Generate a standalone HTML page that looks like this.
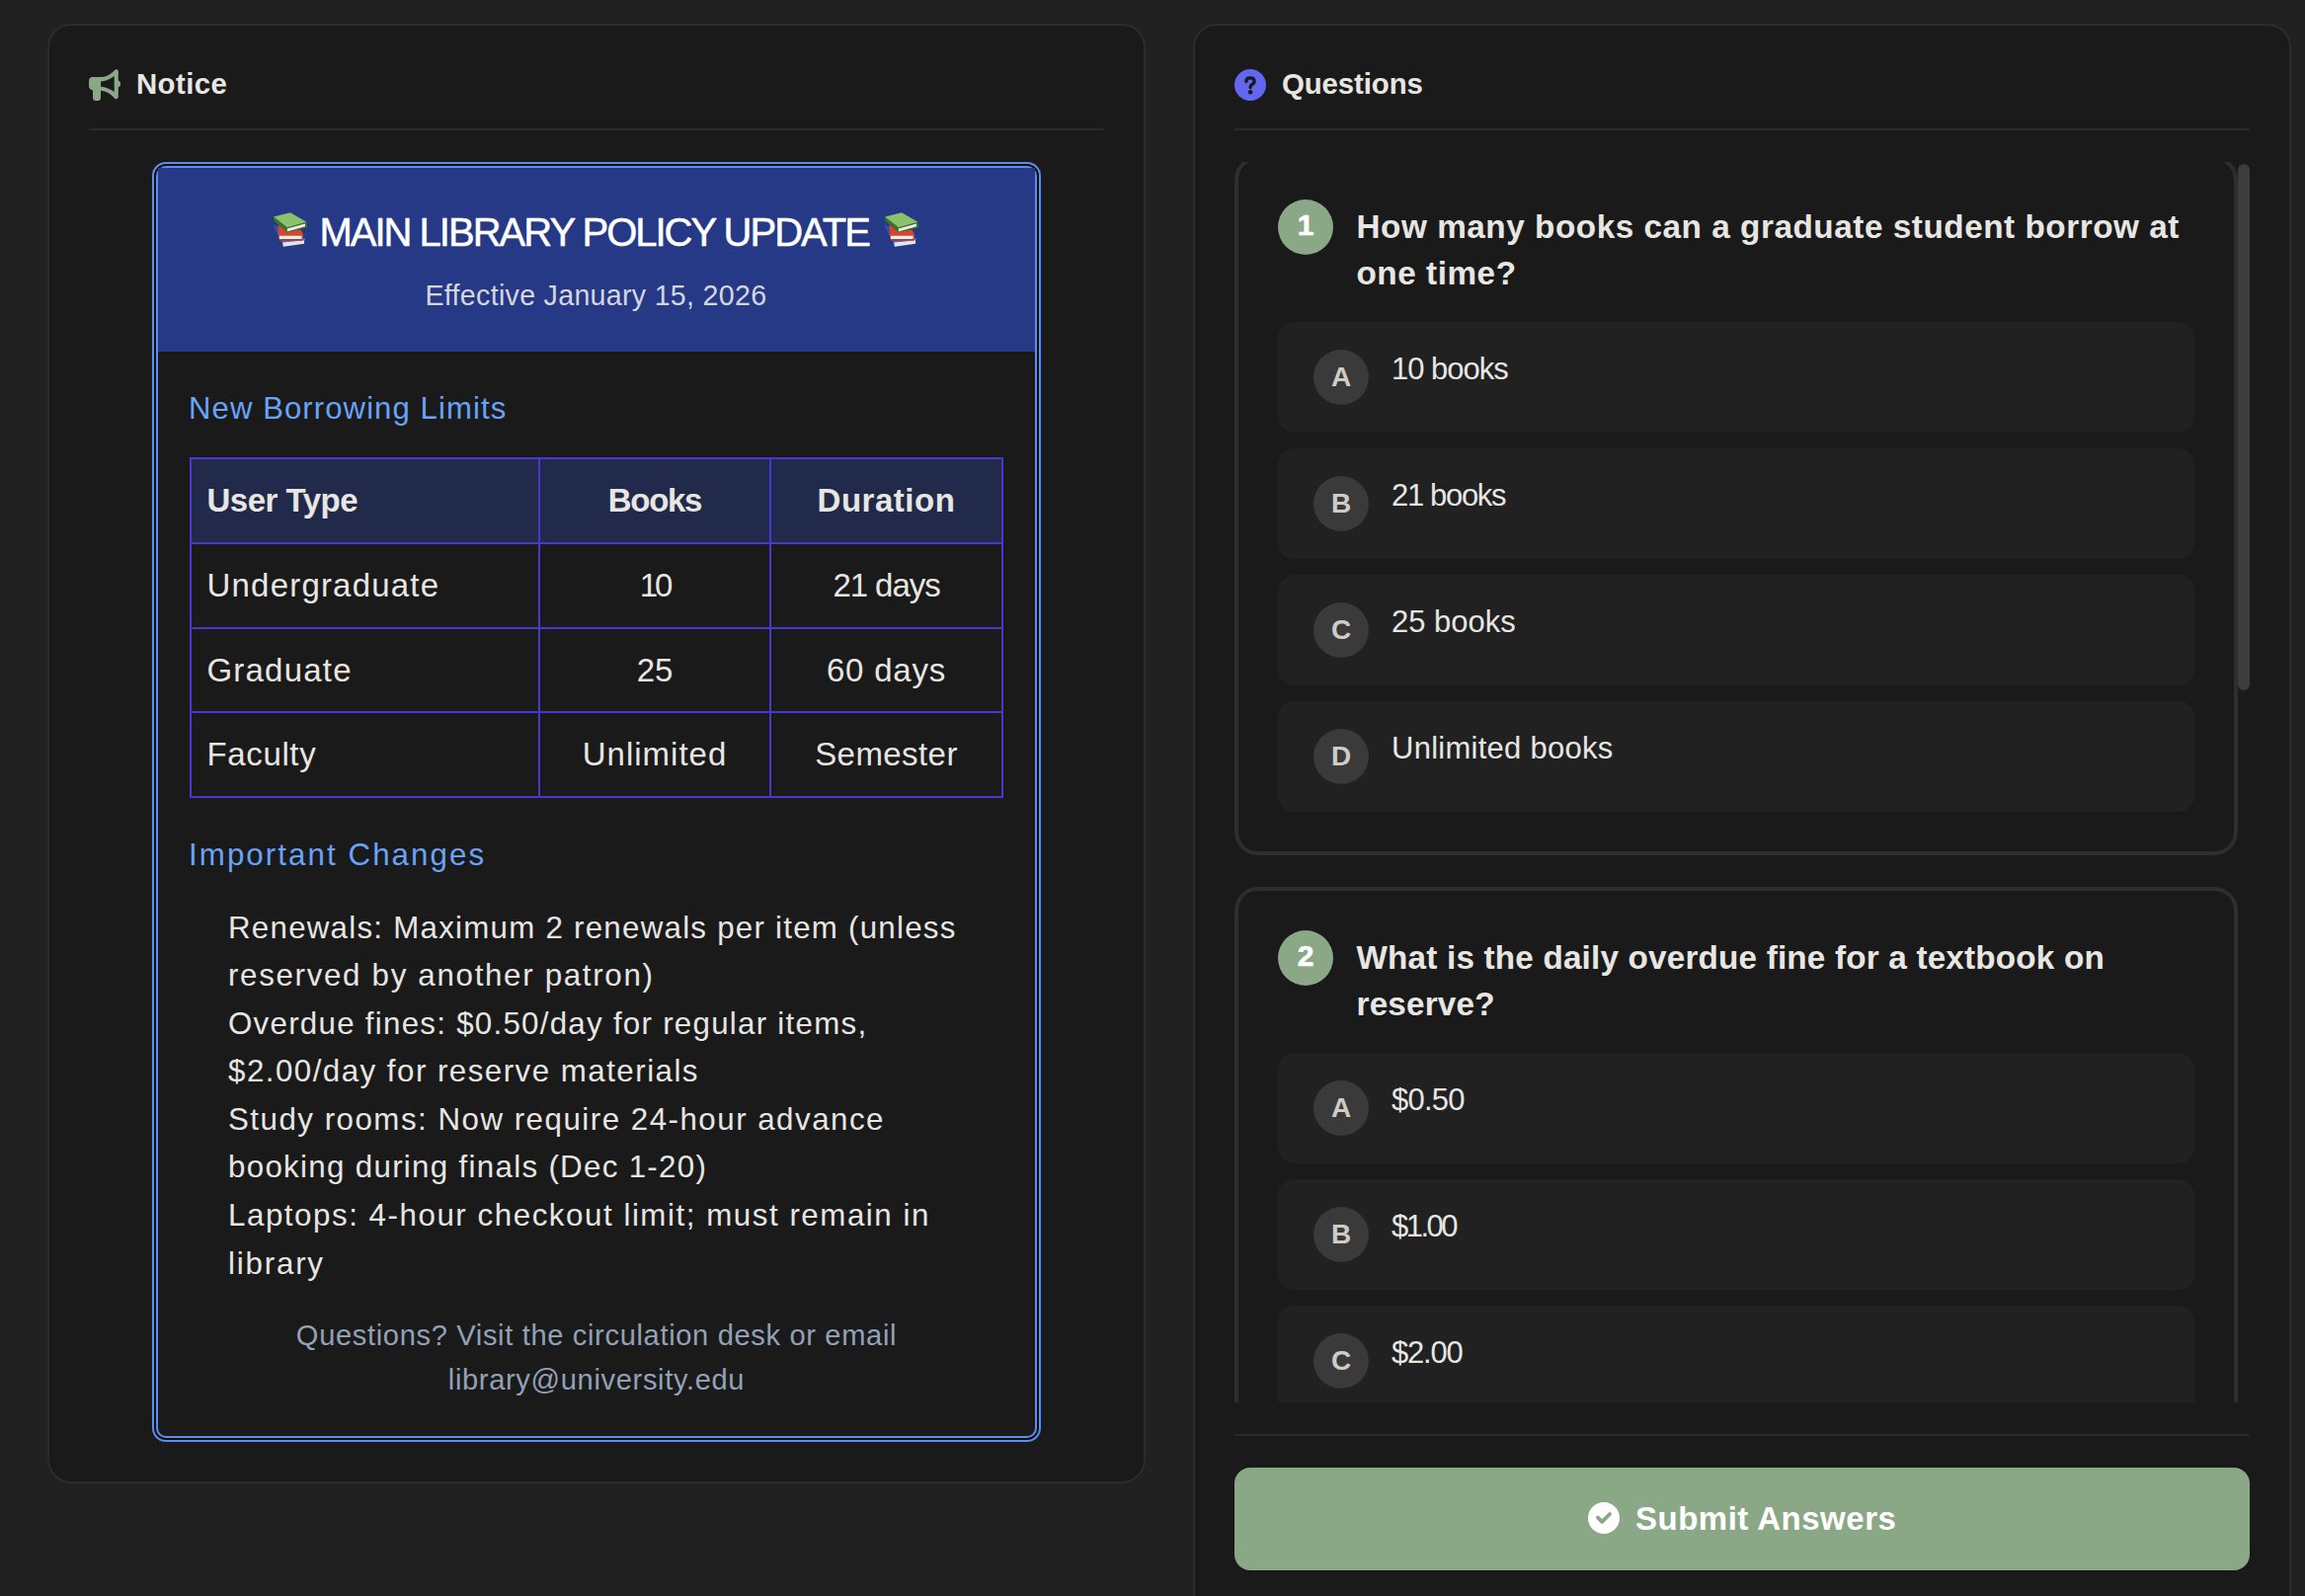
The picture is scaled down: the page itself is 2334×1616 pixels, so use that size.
<!DOCTYPE html>
<html><head><meta charset="utf-8">
<style>
*{box-sizing:border-box;margin:0;padding:0}
html,body{width:2334px;height:1616px;overflow:hidden;background:#212121;font-family:"Liberation Sans",sans-serif;color:#e8e6e3}
.abs{position:absolute}
.panel{position:absolute;background:#1a1a1a;border:2px solid #2c2c2c;border-radius:24px}
.divider{position:absolute;height:2px;background:#2a2a2a}
.t{position:absolute;white-space:nowrap;line-height:1}
.notice{position:absolute;left:154px;top:164px;width:900px;height:1296px;border:2px solid #5a8df5;border-radius:14px;background:#130f04}
.notice-in{position:absolute;left:2px;top:2px;right:2px;bottom:2px;border:2px solid #5a8df5;border-radius:10px;background:#1a1a1a}
.nhead{position:absolute;left:160px;top:170px;width:888px;height:186px;background:#253987}
table.lim{position:absolute;left:192px;top:463px;width:824px;border-collapse:collapse}
table.lim td,table.lim th{border:2px solid #4838d0;height:86px;font-size:33px;font-weight:normal;padding:0;text-align:center;letter-spacing:0.8px;color:#e8e6e3}
table.lim tr.g td{height:85px}
table.lim th{background:#212a4a;font-weight:bold;letter-spacing:-0.6px}
table.lim .l{text-align:left;padding-left:15.5px}
.card{position:absolute;left:0;width:1016px;border:4px solid #2e2e2e;border-radius:24px;background:#1a1a1a}
.opt{position:absolute;left:40px;width:928px;height:112px;background:#212121;border-radius:16px}
.letter{position:absolute;left:36px;top:28px;width:56px;height:56px;border-radius:50%;background:#3a3a3a;color:#cfccc6;font-weight:bold;font-size:28px;text-align:center;line-height:56px}
.otext{position:absolute;left:115px;top:31.5px;font-size:31px;line-height:1;white-space:nowrap;letter-spacing:0.4px}
.num{position:absolute;left:40px;top:40px;width:56px;height:56px;border-radius:50%;background:#8aa886;color:#fff;font-weight:bold;font-size:30px;text-align:center;line-height:52px;-webkit-text-stroke:0.6px #fff}
.qtext{position:absolute;left:119.5px;top:43.6px;font-size:33.3px;font-weight:bold;line-height:47.8px;letter-spacing:0.53px;white-space:nowrap}
</style></head>
<body>
<!-- LEFT PANEL -->
<div class="panel" style="left:48px;top:24px;width:1112px;height:1478px"></div>
<svg class="abs" style="left:90px;top:70px" width="32" height="32" viewBox="0 0 32 32"><path fill="#8aa886" fill-rule="evenodd" d="M4,8.1 L12,8.1 Q19.5,8.1 26,1.2 Q28,-0.6 29.8,1.5 L29.8,11.6 Q32.1,12.4 32.1,15 Q32.1,17.6 29.8,18.4 L29.8,28.8 Q28,31.4 26,29.4 Q20,22.6 12,21.8 L12,29 Q12,32.2 8.5,32.2 L7.5,32.2 Q4,32.2 4,29 L4,21.4 Q0,20.6 0,17 L0,12.1 Q0,8.1 4,8.1 Z M12.1,12.4 L12.1,17.8 Q19.5,18.5 25.7,23 L25.7,7 Q19.5,12 12.1,12.4 Z"/></svg>
<div class="t" style="left:138px;top:70.2px;font-size:29.4px;font-weight:bold;letter-spacing:0.4px">Notice</div>
<div class="divider" style="left:90px;top:130px;width:1028px"></div>

<div class="notice"><div class="notice-in"></div></div>
<div class="nhead"></div>
<svg class="abs" style="left:270px;top:208px" width="48" height="48" viewBox="0 0 48 48"><g id="books">
<polygon points="6.6,20.5 10,20 16.5,36.5 38.5,33.5 38.5,38.8 16.8,41.8" fill="#2f4fae"/>
<polygon points="16.2,37.2 38,35 38,38.8 16.8,41.8" fill="#e6e6de"/>
<polygon points="15.2,35.8 38.6,33.2 39.2,35.2 16,37.4" fill="#3f73e6"/>
<polygon points="11.1,20.2 34.9,25 37,29.8 37,35 12.9,35.4 12,30" fill="#d8442c"/>
<polygon points="12.9,30.7 35.5,30.7 35.5,34 12.9,34.3" fill="#e4f0ee"/>
<polygon points="12.9,34.3 35.5,34 37,35.2 13.2,35.8" fill="#a8342a"/>
<polygon points="7.1,11.4 7.1,15.2 20.8,27.4 41.5,22.3 40.3,16.7 20.8,22.3" fill="#3a7326"/>
<polygon points="7.1,11.4 24,7.2 40.3,16.7 20.8,22.3" fill="#8cc26c"/>
<polygon points="20.8,23.6 39,18.6 39,21.3 20.8,26.4" fill="#f2eef2"/>
</g></svg>
<svg class="abs" style="left:889px;top:208px" width="48" height="48" viewBox="0 0 48 48"><use href="#books"/></svg>
<div class="t" style="left:323.5px;top:214.8px;font-size:40px;letter-spacing:-2.0px;color:#fff;-webkit-text-stroke:0.5px #fff">MAIN LIBRARY POLICY UPDATE</div>
<div class="t" style="left:430.5px;top:284.5px;font-size:28.6px;letter-spacing:0.3px;color:#d6d6e0">Effective January 15, 2026</div>
<div class="t" style="left:191px;top:397.6px;font-size:31.1px;letter-spacing:1.08px;color:#69a3f7">New Borrowing Limits</div>

<table class="lim">
<tr><th class="l" style="width:353px"><span style="letter-spacing:-0.5px">User Type</span></th><th style="width:234px"><span style="letter-spacing:-1.3px">Books</span></th><th><span style="letter-spacing:0.53px">Duration</span></th></tr>
<tr><td class="l"><span style="letter-spacing:1.2px">Undergraduate</span></td><td><span style="letter-spacing:-3px">10</span></td><td><span style="letter-spacing:-1.05px">21 days</span></td></tr>
<tr class="g"><td class="l"><span style="letter-spacing:1.2px">Graduate</span></td><td><span style="letter-spacing:0px">25</span></td><td><span style="letter-spacing:0.8px">60 days</span></td></tr>
<tr><td class="l"><span style="letter-spacing:0.63px">Faculty</span></td><td><span style="letter-spacing:1.0px">Unlimited</span></td><td><span style="letter-spacing:0.43px">Semester</span></td></tr>
</table>

<div class="t" style="left:191px;top:850px;font-size:31.3px;letter-spacing:2.06px;color:#69a3f7">Important Changes</div>
<div class="abs" style="left:231px;top:915.5px;font-size:31.3px;line-height:48.6px;letter-spacing:1.24px;white-space:nowrap">
<div style="letter-spacing:1.24px">Renewals: Maximum 2 renewals per item (unless</div>
<div style="letter-spacing:1.68px">reserved by another patron)</div>
<div style="letter-spacing:1.26px">Overdue fines: $0.50/day for regular items,</div>
<div style="letter-spacing:1.47px">$2.00/day for reserve materials</div>
<div style="letter-spacing:1.49px">Study rooms: Now require 24-hour advance</div>
<div style="letter-spacing:1.3px">booking during finals (Dec 1-20)</div>
<div style="letter-spacing:1.54px">Laptops: 4-hour checkout limit; must remain in</div>
<div style="letter-spacing:1.8px">library</div>
</div>
<div class="abs" style="left:160px;top:1329.8px;width:888px;text-align:center;font-size:29.1px;line-height:45.4px;letter-spacing:0.65px;color:#93a1b7;white-space:nowrap">Questions? Visit the circulation desk or email<br>library@university.edu</div>

<!-- RIGHT PANEL -->
<div class="panel" style="left:1208px;top:24px;width:1112px;height:1640px"></div>
<svg class="abs" style="left:1250px;top:70px" width="32" height="32" viewBox="0 0 32 32"><circle cx="16" cy="16" r="16" fill="#6366ee"/><path d="M11.9,12.6 Q11.9,8.8 16,8.8 Q20.1,8.8 20.1,12.3 Q20.1,14.6 17.5,15.8 Q16.1,16.5 16.1,18.6" fill="none" stroke="#1a1a1a" stroke-width="3.3" stroke-linecap="round"/><circle cx="16.1" cy="23.2" r="2.3" fill="#1a1a1a"/></svg>
<div class="t" style="left:1298px;top:70.2px;font-size:29.4px;font-weight:bold;letter-spacing:-0.1px">Questions</div>
<div class="divider" style="left:1250px;top:130px;width:1028px"></div>

<div class="abs" style="left:1250px;top:164px;width:1028px;height:1256px;overflow:hidden">
  <div class="card" style="top:-6px;height:708px">
    <div class="num">1</div>
    <div class="qtext">How many books can a graduate student borrow at<br>one time?</div>
    <div class="opt" style="top:164px"><div class="letter">A</div><div class="otext" style="letter-spacing:-1.0px">10 books</div></div>
    <div class="opt" style="top:292px"><div class="letter">B</div><div class="otext" style="letter-spacing:-1.33px">21 books</div></div>
    <div class="opt" style="top:420px"><div class="letter">C</div><div class="otext" style="letter-spacing:0px">25 books</div></div>
    <div class="opt" style="top:548px"><div class="letter">D</div><div class="otext" style="letter-spacing:0.26px">Unlimited books</div></div>
  </div>
  <div class="card" style="top:734px;height:708px">
    <div class="num">2</div>
    <div class="qtext" style="letter-spacing:0.17px">What is the daily overdue fine for a textbook on<br>reserve?</div>
    <div class="opt" style="top:164px"><div class="letter">A</div><div class="otext" style="letter-spacing:-0.75px">$0.50</div></div>
    <div class="opt" style="top:292px"><div class="letter">B</div><div class="otext" style="letter-spacing:-2.5px">$1.00</div></div>
    <div class="opt" style="top:420px"><div class="letter">C</div><div class="otext" style="letter-spacing:-1.2px">$2.00</div></div>
  </div>
  <div class="abs" style="left:1016px;top:2px;width:12px;height:533px;border-radius:6px;background:#3c3c3c"></div>
</div>

<div class="divider" style="left:1250px;top:1452px;width:1028px"></div>
<div class="abs" style="left:1250px;top:1486px;width:1028px;height:104px;border-radius:16px;background:#8aa886"></div>
<svg class="abs" style="left:1608px;top:1521px" width="32" height="32" viewBox="0 0 32 32"><circle cx="16" cy="16" r="16" fill="#fff"/><path d="M10,15.6 L14.2,19.8 L22,12" fill="none" stroke="#8aa886" stroke-width="3.8" stroke-linecap="round" stroke-linejoin="round"/></svg>
<div class="t" style="left:1656px;top:1521.4px;font-size:33px;font-weight:bold;letter-spacing:0.5px;color:#fff">Submit Answers</div>
</body></html>
